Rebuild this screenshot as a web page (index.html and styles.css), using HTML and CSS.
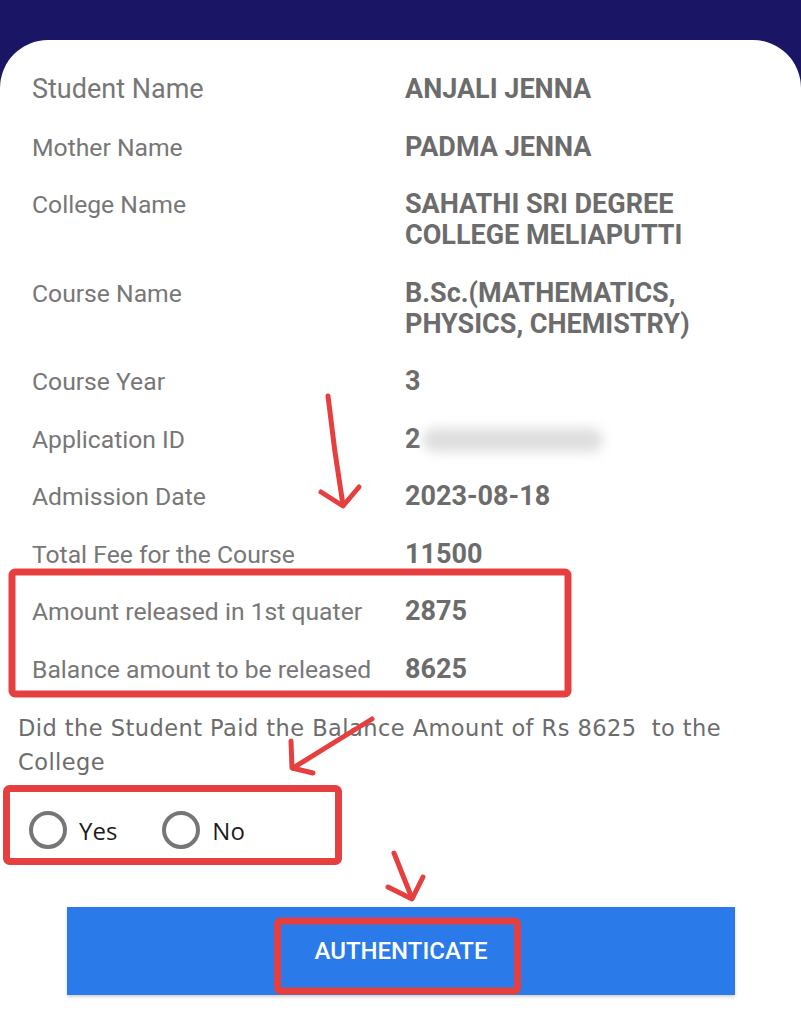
FILE: index.html
```html
<!DOCTYPE html>
<html>
<head>
<meta charset="utf-8">
<link rel="stylesheet" href="styles.css">
</head>
<body>
<div class="page">
  <div class="card">
    <div class="details">
      <div class="label lead">Student Name</div><div class="value">ANJALI JENNA</div>
      <div class="label">Mother Name</div><div class="value">PADMA JENNA</div>
      <div class="label">College Name</div><div class="value">SAHATHI SRI DEGREE COLLEGE MELIAPUTTI</div>
      <div class="label">Course Name</div><div class="value">B.Sc.(MATHEMATICS, PHYSICS, CHEMISTRY)</div>
      <div class="label">Course Year</div><div class="value">3</div>
      <div class="label">Application ID</div><div class="value">2<span class="blur"></span></div>
      <div class="label">Admission Date</div><div class="value">2023-08-18</div>
      <div class="label">Total Fee for the Course</div><div class="value">11500</div>
      <div class="label">Amount released in 1st quater</div><div class="value">2875</div>
      <div class="label">Balance amount to be released</div><div class="value">8625</div>
    </div>
    <p class="question">Did the Student Paid the Balance Amount of Rs 8625&nbsp; to the<br>College</p>
    <div class="radios">
      <label class="radio"><span class="circle"></span><span class="rtext">Yes</span></label>
      <label class="radio"><span class="circle"></span><span class="rtext">No</span></label>
    </div>
    <div class="btnwrap"><button class="btn">AUTHENTICATE</button></div>
  </div>
  <svg class="marks" width="801" height="1024" viewBox="0 0 801 1024">
    <g fill="none" stroke="#e5403f" stroke-linecap="round" stroke-linejoin="round">
      <rect x="12" y="572" width="556" height="122" rx="3" stroke-width="7"/>
      <rect x="6.5" y="788.5" width="332" height="73" rx="3" stroke-width="7"/>
      <rect x="277.5" y="921" width="240" height="70" rx="3" stroke-width="7"/>
      <path d="M328 396 Q334 450 343 505" stroke-width="5"/>
      <path d="M321 492 L343 506 L359 487" stroke-width="5"/>
      <path d="M372 719 Q330 745 293 768" stroke-width="5"/>
      <path d="M291 741 L292 768 L313 773" stroke-width="5"/>
      <path d="M394 853 Q403 876 412 898" stroke-width="5"/>
      <path d="M388 887 L412 899 L423 877" stroke-width="5"/>
    </g>
  </svg>
</div>
</body>
</html>
```
FILE: styles.css
```css
* { box-sizing: border-box; }
html, body { margin: 0; padding: 0; }
body {
  background: #1b1565;
  width: 801px;
  height: 1024px;
  overflow: hidden;
}
.page {
  position: relative;
  width: 801px;
  height: 1024px;
  padding-top: 40px;
}
.card {
  background: #ffffff;
  border-radius: 48px 48px 0 0;
  height: 984px;
  padding-top: 21px;
}
.details {
  display: grid;
  grid-template-columns: 373px 350px;
  padding-left: 32px;
}
.label, .value {
  font-family: Roboto, "Liberation Sans", sans-serif;
  line-height: 31px;
  padding: 13px 0 13.5px;
}
.label {
  font-size: 24.7px;
  color: #777777;
}
.label.lead {
  font-size: 27px;
}
.value {
  font-size: 27px;
  font-weight: 700;
  color: #6c6c6c;
}
.blur {
  display: inline-block;
  vertical-align: middle;
  width: 180px;
  height: 24px;
  margin-left: 2px;
  background: #dedede;
  border-radius: 12px;
  filter: blur(6px);
}
.question {
  margin: 13px 0 0;
  padding: 0 0 0 18px;
  font-family: "DejaVu Sans", "Liberation Sans", sans-serif;
  font-size: 22.5px;
  letter-spacing: 0.45px;
  line-height: 34px;
  color: #6c6c6c;
}
.radios {
  display: flex;
  align-items: center;
  gap: 45px;
  padding-left: 29px;
  margin-top: 31px;
  height: 40px;
}
.radio {
  display: flex;
  align-items: center;
  gap: 12px;
}
.circle {
  width: 38px;
  height: 38px;
  border: 4px solid #767676;
  border-radius: 50%;
}
.rtext {
  font-family: "Open Sans", "Liberation Sans", sans-serif;
  font-size: 24px;
  color: #1c1c1c;
}
.btnwrap {
  padding: 57px 66px 0 67px;
}
.btn {
  display: block;
  width: 668px;
  height: 88px;
  border: none;
  background: #2a7be9;
  color: #ffffff;
  font-family: Roboto, "Liberation Sans", sans-serif;
  font-weight: 500;
  font-size: 24px;
  box-shadow: 0 2px 3px rgba(0,0,0,0.18);
}
.marks {
  position: absolute;
  left: 0;
  top: 0;
  pointer-events: none;
}
```
